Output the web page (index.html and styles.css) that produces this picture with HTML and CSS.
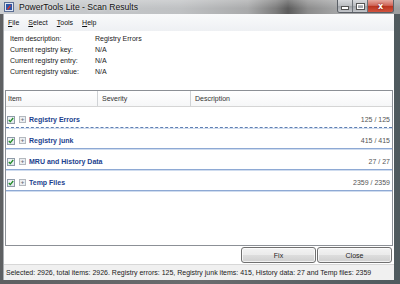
FILE: index.html
```html
<!DOCTYPE html>
<html>
<head>
<meta charset="utf-8">
<link rel="stylesheet" href="styles.css">
</head>
<body>
<div class="window">
  <div class="titlebar">
    <svg class="appicon" width="10" height="10" viewBox="0 0 10 10">
      <rect x="0.5" y="0.5" width="9" height="9" fill="#dfe6f2" stroke="#5a6e94"/>
      <rect x="2" y="2" width="6" height="6" fill="#2c55a8"/>
      <path d="M3 7 L6 3 L7 4 L4 8 Z" fill="#d63a2e"/>
    </svg>
    <span class="title">PowerTools Lite - Scan Results</span>
    <div class="caption">
      <span class="cb cb-min"><span class="glyph-min"></span></span>
      <span class="cb cb-max"><span class="glyph-max"></span></span>
      <span class="cb cb-close">x</span>
    </div>
  </div>
  <div class="client">
    <div class="menubar">
      <span class="menu"><u>F</u>ile</span>
      <span class="menu"><u>S</u>elect</span>
      <span class="menu"><u>T</u>ools</span>
      <span class="menu"><u>H</u>elp</span>
    </div>
    <div class="info">
      <span>Item description:</span><span>Registry Errors</span>
      <span>Current registry key:</span><span>N/A</span>
      <span>Current registry entry:</span><span>N/A</span>
      <span>Current registry value:</span><span>N/A</span>
    </div>
    <div class="list">
      <div class="list-header">
        <span class="col">Item</span>
        <span class="col">Severity</span>
        <span class="col last">Description</span>
      </div>
      <div class="group focused">
        <span class="check"><svg width="6" height="6" viewBox="0 0 6 6"><path d="M0.8 3 L2.3 4.6 L5.2 1" fill="none" stroke="#1f8a25" stroke-width="1.3"/></svg></span>
        <span class="expander">+</span>
        <span class="gname">Registry Errors</span>
        <span class="count">125 / 125</span>
      </div>
      <div class="group">
        <span class="check"><svg width="6" height="6" viewBox="0 0 6 6"><path d="M0.8 3 L2.3 4.6 L5.2 1" fill="none" stroke="#1f8a25" stroke-width="1.3"/></svg></span>
        <span class="expander">+</span>
        <span class="gname">Registry junk</span>
        <span class="count">415 / 415</span>
      </div>
      <div class="group">
        <span class="check"><svg width="6" height="6" viewBox="0 0 6 6"><path d="M0.8 3 L2.3 4.6 L5.2 1" fill="none" stroke="#1f8a25" stroke-width="1.3"/></svg></span>
        <span class="expander">+</span>
        <span class="gname">MRU and History Data</span>
        <span class="count">27 / 27</span>
      </div>
      <div class="group">
        <span class="check"><svg width="6" height="6" viewBox="0 0 6 6"><path d="M0.8 3 L2.3 4.6 L5.2 1" fill="none" stroke="#1f8a25" stroke-width="1.3"/></svg></span>
        <span class="expander">+</span>
        <span class="gname">Temp Files</span>
        <span class="count">2359 / 2359</span>
      </div>
    </div>
    <div class="buttons">
      <button class="btn">Fix</button>
      <button class="btn">Close</button>
    </div>
    <div class="status">Selected: 2926, total items: 2926. Registry errors: 125, Registry junk items: 415, History data: 27 and Temp files: 2359</div>
  </div>
</div>
</body>
</html>
```

FILE: styles.css
```css
* { box-sizing: border-box; }
html, body { margin: 0; padding: 0; }
body {
  width: 400px;
  height: 284px;
  overflow: hidden;
  font-family: "Liberation Sans", Arial, sans-serif;
  font-size: 7px;
  color: #222;
}
.window {
  width: 400px;
  height: 284px;
  display: flex;
  flex-direction: column;
  background: linear-gradient(to right, #5e6062 0%, #6a6c6e 50%, #4f5a5e 100%);
}
.titlebar {
  height: 14px;
  flex: none;
  display: flex;
  align-items: center;
  padding-left: 4px;
  background:
    linear-gradient(to bottom, rgba(255,255,255,0.25), rgba(255,255,255,0) 60%),
    linear-gradient(to right, #c9cccf 0%, #bfc1c3 45%, #a9aaab 62%, #7c7c7c 69%, #5c5c5c 72%, #8c8c8c 77%, #a3a4a5 84%, #9c9e9f 100%);
}
.appicon { flex: none; margin-right: 5px; }
.title {
  font-size: 8.6px;
  color: #111;
  text-shadow: 0 0 3px rgba(255,255,255,0.8);
  flex: 1;
}
.caption {
  display: flex;
  align-self: flex-start;
  margin-right: 6px;
  height: 13px;
  border: 1px solid #5a5f66;
  border-top: none;
  border-radius: 0 0 3px 3px;
  overflow: hidden;
}
.cb {
  height: 12px;
  display: flex;
  align-items: center;
  justify-content: center;
  color: #fff;
}
.cb-min, .cb-max {
  width: 15px;
  background: linear-gradient(to bottom, #d8dadd 0%, #b9bcc0 50%, #9ea2a7 51%, #c3c6ca 100%);
  border-right: 1px solid #6d7278;
}
.glyph-min { width: 6px; height: 2px; background: #fff; margin-top: 4px; box-shadow: 0 0 0 1px #555; }
.glyph-max { width: 7px; height: 5px; border: 1.5px solid #fff; box-shadow: 0 0 0 1px #555; }
.cb-close {
  width: 25px;
  font-family: "DejaVu Sans", sans-serif;
  font-weight: bold;
  font-size: 8px;
  background: linear-gradient(to bottom, #e5a99f 0%, #d0675a 45%, #b8341f 52%, #d2543f 100%);
  text-shadow: 0 0 2px #6a1208;
}
.client {
  flex: 1;
  margin: 0 6px 4px 4px;
  background: #fff;
  display: flex;
  flex-direction: column;
  box-shadow: -1px 0 0 #a9adb1;
}
.menubar {
  height: 17px;
  flex: none;
  display: flex;
  align-items: center;
  padding-left: 4px;
  font-size: 7px;
  background: linear-gradient(to bottom, #f9fafb, #eef0f3);
  color: #111;
}
.menu { margin-right: 9px; }
.menu u { text-decoration: underline; }
.info {
  display: grid;
  grid-template-columns: 85px 1fr;
  grid-auto-rows: 11px;
  align-items: center;
  padding: 2px 0 0 6px;
  height: 59px;
  flex: none;
  color: #1a1a1a;
}
.list {
  height: 156px;
  flex: none;
  margin: 0 1px 0 1px;
  border: 1px solid #8c9096;
  display: flex;
  flex-direction: column;
}
.list-header {
  height: 16px;
  flex: none;
  display: grid;
  grid-template-columns: 92px 93px 1fr;
  border-bottom: 1px solid #d5d5d5;
  background: linear-gradient(to bottom, #ffffff, #f6f7f8);
  color: #333;
}
.col {
  display: flex;
  align-items: center;
  padding-left: 2px;
  border-right: 1px solid #d0d3d6;
}
.col + .col { padding-left: 4px; }
.col.last { border-right: none; }
.group {
  height: 16px;
  flex: none;
  margin-top: 5px;
  display: flex;
  align-items: center;
  padding-left: 1px;
  padding-right: 2px;
  border-bottom: 1px solid #8ea9d4;
  box-shadow: 0 1px 0 #cfdcef;
}
.group.focused { border-bottom: 1px dashed #5f7fb2; }
.check {
  width: 8px;
  height: 8px;
  border: 1px solid #8e9aa8;
  background: linear-gradient(to bottom, #f2f5f7, #dfe6ea);
  display: flex;
  align-items: center;
  justify-content: center;
  flex: none;
}
.expander {
  width: 7px;
  height: 7px;
  margin-left: 4px;
  border: 1px solid #b3b8be;
  background: #eceff2;
  color: #6c737a;
  font-size: 6px;
  line-height: 5px;
  text-align: center;
  flex: none;
  font-weight: bold;
}
.gname {
  margin-left: 3px;
  font-weight: bold;
  font-size: 7px;
  color: #1c3f8e;
  flex: 1;
}
.count { color: #555; }
.buttons {
  height: 17px;
  flex: none;
  margin-top: 1px;
  display: flex;
  justify-content: flex-end;
  gap: 1px;
  padding-right: 2px;
}
.btn {
  width: 75px;
  height: 16px;
  font-family: inherit;
  font-size: 7px;
  color: #222;
  border: 1px solid #707070;
  border-radius: 3px;
  background: linear-gradient(to bottom, #f3f3f3 0%, #ebebeb 48%, #dddddd 52%, #cfcfcf 100%);
  box-shadow: inset 0 0 0 1px rgba(255,255,255,0.7);
  padding: 0;
}
.status {
  flex: 1;
  display: flex;
  align-items: center;
  padding-left: 2px;
  background: #f0f0f0;
  border-top: 1px solid #d7d7d7;
  white-space: nowrap;
  overflow: hidden;
  color: #1a1a1a;
}
```
